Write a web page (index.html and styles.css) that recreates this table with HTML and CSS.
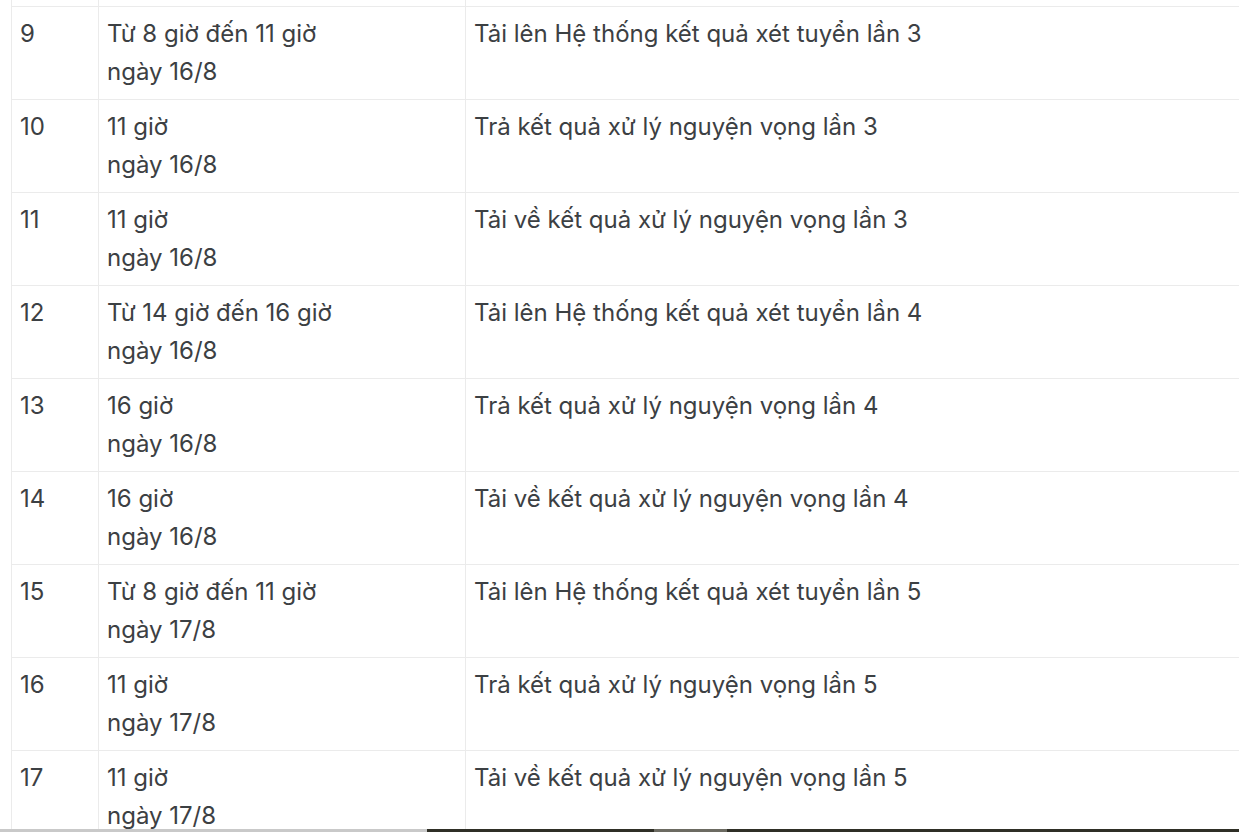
FILE: index.html
```html
<!DOCTYPE html>
<html lang="vi">
<head>
    <meta charset="UTF-8">
    <meta name="viewport" content="width=device-width, initial-scale=1.0">
    <title>Lịch xét tuyển</title>
    <link rel="stylesheet" href="styles.css">
</head>
<body>
    <div class="page">
        <table class="schedule">
            <colgroup>
                <col class="col-no">
                <col class="col-time">
                <col class="col-task">
            </colgroup>
            <tbody>
                <tr class="stub">
                    <td></td>
                    <td></td>
                    <td></td>
                </tr>
                <tr>
                    <td>9</td>
                    <td>Từ 8 giờ đến 11 giờ<br>ngày 16/8</td>
                    <td>Tải lên Hệ thống kết quả xét tuyển lần 3</td>
                </tr>
                <tr>
                    <td>10</td>
                    <td>11 giờ<br>ngày 16/8</td>
                    <td>Trả kết quả xử lý nguyện vọng lần 3</td>
                </tr>
                <tr>
                    <td>11</td>
                    <td>11 giờ<br>ngày 16/8</td>
                    <td>Tải về kết quả xử lý nguyện vọng lần 3</td>
                </tr>
                <tr>
                    <td>12</td>
                    <td>Từ 14 giờ đến 16 giờ<br>ngày 16/8</td>
                    <td>Tải lên Hệ thống kết quả xét tuyển lần 4</td>
                </tr>
                <tr>
                    <td>13</td>
                    <td>16 giờ<br>ngày 16/8</td>
                    <td>Trả kết quả xử lý nguyện vọng lần 4</td>
                </tr>
                <tr>
                    <td>14</td>
                    <td>16 giờ<br>ngày 16/8</td>
                    <td>Tải về kết quả xử lý nguyện vọng lần 4</td>
                </tr>
                <tr>
                    <td>15</td>
                    <td>Từ 8 giờ đến 11 giờ<br>ngày 17/8</td>
                    <td>Tải lên Hệ thống kết quả xét tuyển lần 5</td>
                </tr>
                <tr>
                    <td>16</td>
                    <td>11 giờ<br>ngày 17/8</td>
                    <td>Trả kết quả xử lý nguyện vọng lần 5</td>
                </tr>
                <tr>
                    <td>17</td>
                    <td>11 giờ<br>ngày 17/8</td>
                    <td>Tải về kết quả xử lý nguyện vọng lần 5</td>
                </tr>
            </tbody>
        </table>
    </div>
    <div class="scrollbar">
        <div class="track-left"></div>
        <div class="track-dark"></div>
        <div class="thumb"></div>
        <div class="track-rest"></div>
    </div>
</body>
</html>
```

FILE: styles.css
```css
body, html {
    margin: 0;
    padding: 0;
    height: 100%;
    overflow: hidden;
    background-color: #ffffff;
    font-family: Inter, Roboto, Arial, sans-serif;
}
.page {
    padding-left: 11px;
}
.schedule {
    width: 1300px;
    border-collapse: collapse;
    table-layout: fixed;
    color: #3c4043;
    font-size: 24px;
    line-height: 38px;
}
.col-no {
    width: 87px;
}
.col-time {
    width: 367px;
}
.schedule td {
    border: 1px solid #ebebeb;
    padding: 8px;
    height: 76px;
    vertical-align: top;
}
.schedule .stub td {
    border-top: 0;
    height: 6px;
    padding: 0;
}
.scrollbar {
    position: fixed;
    left: 0;
    right: 0;
    bottom: 0;
    height: 3px;
    display: flex;
}
.track-left {
    width: 427px;
    background-color: #c9c9c9;
}
.track-dark {
    width: 227px;
    background-color: #2f2f26;
}
.thumb {
    width: 73px;
    background-color: #6c6b62;
}
.track-rest {
    flex: 1;
    background-color: #2f2f26;
}
```
